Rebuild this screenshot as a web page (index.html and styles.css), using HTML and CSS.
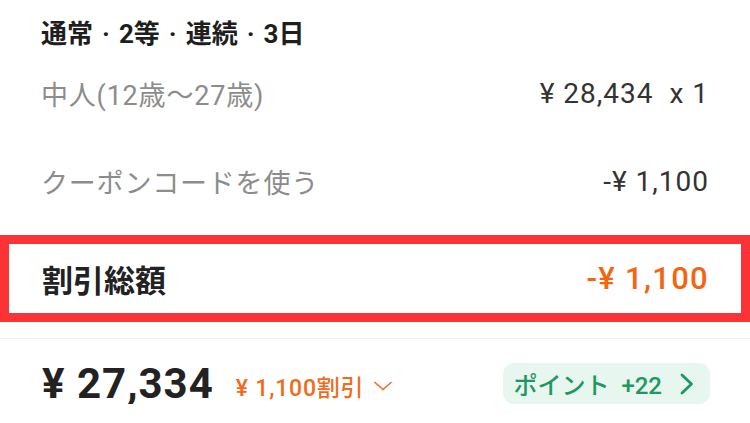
FILE: index.html
```html
<!DOCTYPE html>
<html lang="ja">

<head>
    <meta charset="UTF-8">
    <meta name="viewport" content="width=device-width, initial-scale=1.0">
    <title>料金明細</title>
    <link rel="stylesheet" href="styles.css">
</head>

<body>
    <!-- Ticket detail -->
    <div class="detail">
        <div class="title">通常<span class="dot">·</span>2等<span class="dot">·</span>連続<span class="dot">·</span>3日</div>
        <div class="row">
            <span class="label">中人(12歳〜27歳)</span>
            <span class="value">¥ 28,434 &nbsp;x 1</span>
        </div>
        <div class="row coupon">
            <span class="label">クーポンコードを使う</span>
            <span class="value">-¥ 1,100</span>
        </div>
    </div>

    <!-- Discount total (highlighted) -->
    <div class="total">
        <span class="total-label">割引総額</span>
        <span class="total-value">-¥ 1,100</span>
    </div>

    <div class="divider"></div>

    <!-- Summary bar -->
    <div class="summary">
        <div class="price">
            <span class="price-amount">¥ 27,334</span>
            <span class="price-discount">¥ 1,100割引
                <svg class="chev-down" width="18" height="10" viewBox="0 0 18 10">
                    <polyline points="1,1.5 9,8.5 17,1.5" fill="none" stroke="#f26a1b" stroke-width="1.6" stroke-linecap="round" stroke-linejoin="round" />
                </svg>
            </span>
        </div>
        <div class="points">
            <span>ポイント&nbsp; +22</span>
            <svg width="14" height="22" viewBox="0 0 14 22">
                <polyline points="2,2 11.5,11 2,20" fill="none" stroke="#1f9663" stroke-width="2.8" stroke-linecap="round" stroke-linejoin="round" />
            </svg>
        </div>
    </div>
</body>

</html>
```

FILE: styles.css
```css
body {
    margin: 0;
    background-color: #ffffff;
    font-family: Roboto, 'Noto Sans CJK JP', sans-serif;
    color: #222222;
}

.detail {
    padding: 16px 42px 0 41px;
}

.title {
    font-size: 26px;
    font-weight: 700;
    line-height: 36px;
    color: #1e1e1e;
}

.title .dot {
    margin: 0 9px;
}

.row {
    display: flex;
    justify-content: space-between;
    align-items: center;
    height: 40px;
    margin-top: 21px;
    font-size: 27px;
}

.row.coupon {
    margin-top: 48px;
}

.label {
    color: #8c8c8c;
    letter-spacing: 0.8px;
}

.value {
    color: #333333;
    font-size: 28px;
    letter-spacing: 1px;
    margin-right: -1px;
}

/* Highlighted total */
.total {
    display: flex;
    justify-content: space-between;
    align-items: center;
    box-sizing: border-box;
    height: 87px;
    margin-top: 34px;
    padding: 0 33px;
    border: 9px solid #fb3336;
}

.total-label {
    font-size: 31px;
    font-weight: 700;
    color: #222222;
}

.total-value {
    font-size: 31px;
    font-weight: 500;
    letter-spacing: 1.3px;
    margin-right: -1px;
    color: #f4650f;
}

.divider {
    height: 1px;
    margin-top: 16px;
    background-color: #f0f0f0;
}

.summary {
    display: flex;
    justify-content: space-between;
    align-items: center;
    height: 41px;
    margin-top: 24px;
    padding: 0 40px 0 42px;
}

.price {
    display: flex;
    align-items: center;
    gap: 22px;
}

.price-amount {
    font-size: 42px;
    font-weight: 700;
    letter-spacing: 1px;
    color: #222222;
}

.price-discount {
    display: flex;
    align-items: center;
    gap: 10px;
    font-size: 23px;
    font-weight: 500;
    letter-spacing: 0.8px;
    color: #f26a1b;
    padding-top: 4px;
}

.points {
    display: flex;
    align-items: center;
    gap: 18px;
    height: 41px;
    padding: 0 16px 0 10px;
    border-radius: 11px;
    background-color: #e7f7ef;
    font-size: 24px;
    font-weight: 500;
    color: #1f9663;
}
```
